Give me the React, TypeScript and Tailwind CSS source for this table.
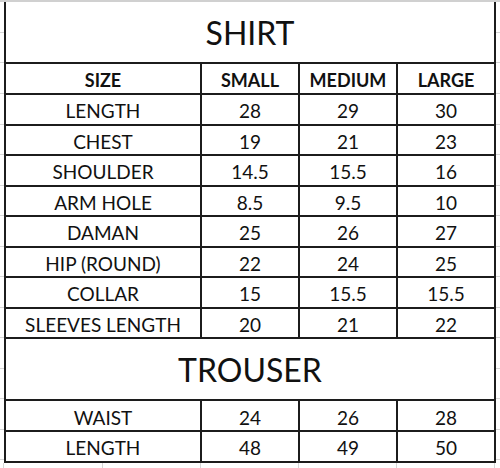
const shirtRows = [
  ["LENGTH", "28", "29", "30"],
  ["CHEST", "19", "21", "23"],
  ["SHOULDER", "14.5", "15.5", "16"],
  ["ARM HOLE", "8.5", "9.5", "10"],
  ["DAMAN", "25", "26", "27"],
  ["HIP (ROUND)", "22", "24", "25"],
  ["COLLAR", "15", "15.5", "15.5"],
  ["SLEEVES LENGTH", "20", "21", "22"],
];

const trouserRows = [
  ["WAIST", "24", "26", "28"],
  ["LENGTH", "48", "49", "50"],
];

// excel row heights behind the table, for the faint gridline ticks at the sides
const sideRows = [31, 30, 31, 30.5, 30.5, 30.5, 30.5, 30.5, 30.5, 30.5, 30.5, 31, 30, 31, 30];

const SideStrip = () => (
  <div className="flex w-[4px] flex-col">
    {sideRows.map((h, i) => (
      <div key={i} className="border-b border-[#d6d6d6]" style={{ height: h }} />
    ))}
  </div>
);

const Title = ({ text }: { text: string }) => (
  <div className="col-span-4 flex h-[60px] items-center justify-center bg-white pt-[2px] text-[32px] leading-none text-[#111]">
    {text}
  </div>
);

const Row = ({ cells, tall }: { cells: string[]; tall?: boolean }) => (
  <>
    {cells.map((c, i) => (
      <div
        key={i}
        className={`flex items-center justify-center bg-white pt-[3px] text-[19px] leading-none text-[#111] ${
          tall ? "h-[29px]" : "h-[28.5px]"
        }`}
      >
        {c}
      </div>
    ))}
  </>
);

export default function App() {
  return (
    <div className="h-[468px] w-[500px] overflow-hidden bg-white font-['Lato',sans-serif]">
      <div className="h-[2px] bg-[#d0d0d0]" />
      <div className="flex">
        <SideStrip />
        <div className="grid w-[492px] grid-cols-[194px_96px_96px_96px] gap-[2px] bg-[#1c1c1c] px-[2px] pb-[2px]">
          <Title text="SHIRT" />
          {["SIZE", "SMALL", "MEDIUM", "LARGE"].map((h) => (
            <div
              key={h}
              className="flex h-[29px] items-center justify-center bg-white pt-[3px] text-[18px] font-bold leading-none text-[#111]"
            >
              {h}
            </div>
          ))}
          {shirtRows.map((r, i) => (
            <Row key={i} cells={r} />
          ))}
          <Title text="TROUSER" />
          {trouserRows.map((r, i) => (
            <Row key={i} cells={r} tall={i === 0} />
          ))}
        </div>
        <SideStrip />
      </div>
      <div className="flex h-[6px]">
        <div className="w-[4px] border-r border-[#d6d6d6]" />
        <div className="w-[99px] border-r border-[#d6d6d6]" />
        <div className="w-[98px] border-r border-[#d6d6d6]" />
        <div className="w-[98px] border-r border-[#d6d6d6]" />
        <div className="w-[98px] border-r border-[#d6d6d6]" />
        <div className="w-[98px] border-r border-[#d6d6d6]" />
      </div>
    </div>
  );
}
